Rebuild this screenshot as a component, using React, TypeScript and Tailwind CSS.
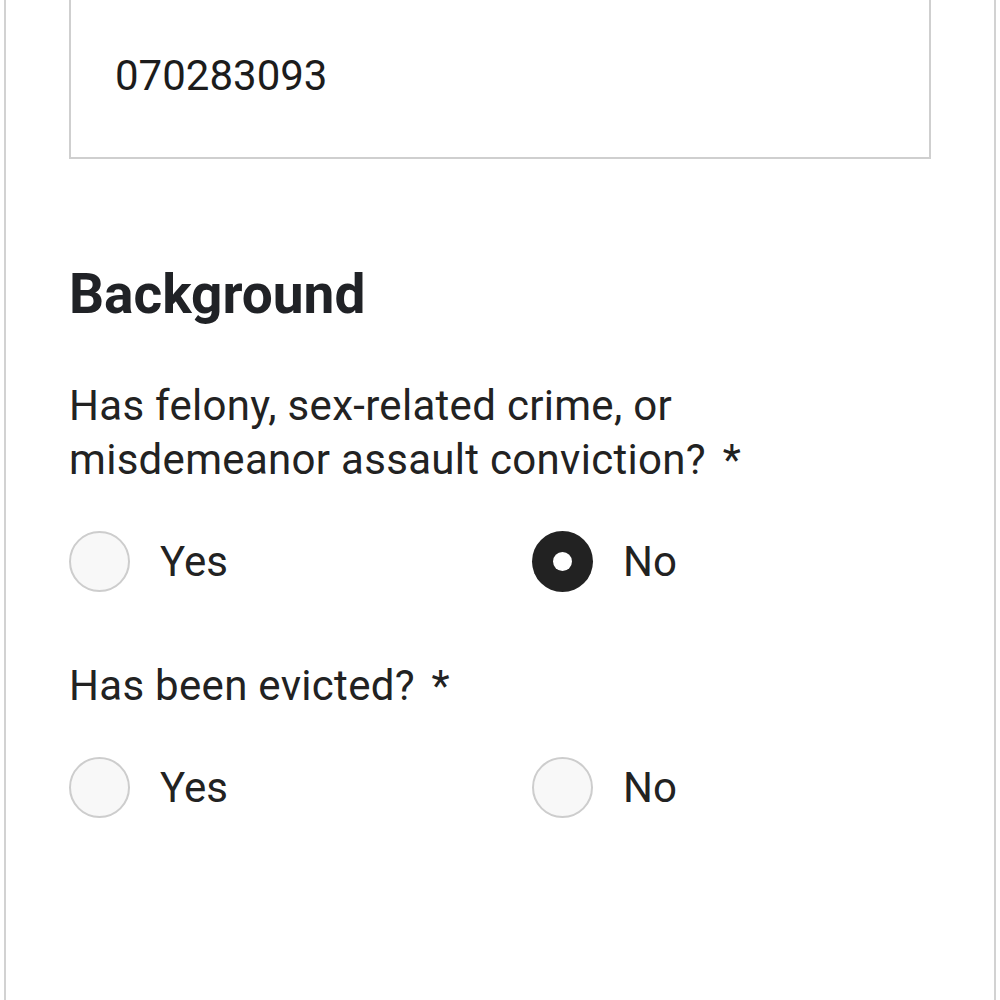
import { useState } from 'react'

type Choice = 'yes' | 'no' | null

function Radio({ checked, label, onClick }: { checked: boolean; label: string; onClick: () => void }) {
  return (
    <button type="button" onClick={onClick} className="flex items-center gap-[30px] text-left">
      {checked ? (
        <span className="flex h-[61px] w-[61px] items-center justify-center rounded-full bg-[#222222]">
          <span className="h-[19px] w-[19px] rounded-full bg-white" />
        </span>
      ) : (
        <span className="h-[61px] w-[61px] rounded-full border-2 border-[#cdcdcd] bg-[#f8f8f8]" />
      )}
      <span className="text-[42px] leading-[50px] text-[#222222]">{label}</span>
    </button>
  )
}

function Question({ label, value, onChange }: { label: string; value: Choice; onChange: (v: Choice) => void }) {
  return (
    <div>
      <p className="max-w-[720px] text-[42px] leading-[54px] tracking-[0.3px] text-[#222222]">
        {label} <span className="ml-[6px]">*</span>
      </p>
      <div className="mt-[44px] grid grid-cols-2 gap-[64px]">
        <Radio checked={value === 'yes'} label="Yes" onClick={() => onChange('yes')} />
        <Radio checked={value === 'no'} label="No" onClick={() => onChange('no')} />
      </div>
    </div>
  )
}

export default function App() {
  const [conviction, setConviction] = useState<Choice>('no')
  const [evicted, setEvicted] = useState<Choice>(null)

  return (
    <div className="h-[1000px] overflow-hidden bg-white" style={{ fontFamily: 'Roboto, "Noto Sans", sans-serif' }}>
      <div className="mx-[4px] h-full border-x-2 border-[#d2d2d2] bg-white px-[63px]">
        <div className="h-[159px] border-2 border-t-0 border-[#cfcfcf] pl-[44px] pt-[51px]">
          <span className="text-[42px] leading-[50px] text-[#1c1c1c]">070283093</span>
        </div>

        <h2 className="mt-[103px] text-[55px] font-bold leading-[64px] text-[#202226]">Background</h2>

        <div className="mt-[53px]">
          <Question
            label="Has felony, sex-related crime, or misdemeanor assault conviction?"
            value={conviction}
            onChange={setConviction}
          />
        </div>

        <div className="mt-[67px]">
          <Question label="Has been evicted?" value={evicted} onChange={setEvicted} />
        </div>
      </div>
    </div>
  )
}
